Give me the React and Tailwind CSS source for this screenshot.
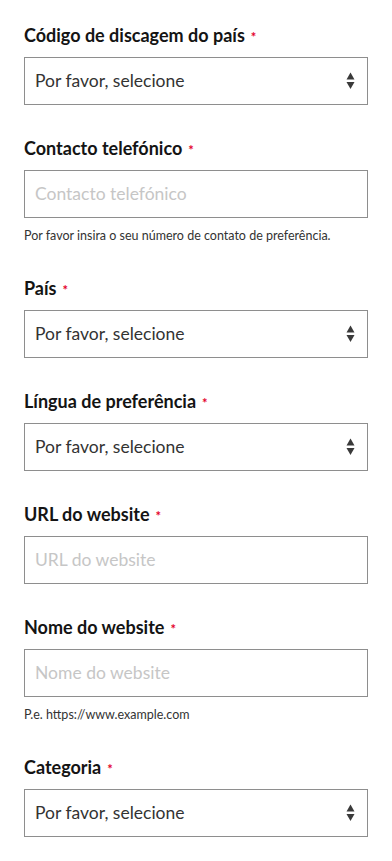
import React from "react";

const fields = [
  { label: "Código de discagem do país", type: "select" },
  { label: "Contacto telefónico", type: "input", placeholder: "Contacto telefónico", help: "Por favor insira o seu número de contato de preferência." },
  { label: "País", type: "select" },
  { label: "Língua de preferência", type: "select" },
  { label: "URL do website", type: "input", placeholder: "URL do website" },
  { label: "Nome do website", type: "input", placeholder: "Nome do website", help: "P.e. https://www.example.com" },
  { label: "Categoria", type: "select" },
];

function Arrows() {
  return (
    <svg width="9" height="18" viewBox="0 0 9 18" className="shrink-0">
      <path d="M4.5 0.5 L8.5 7.5 L0.5 7.5 Z" fill="#3a3a3a" />
      <path d="M0.5 10 L8.5 10 L4.5 17 Z" fill="#3a3a3a" />
    </svg>
  );
}

function Field({ f }) {
  return (
    <div className="flex flex-col">
      <div className="mb-[10px] h-[24px] overflow-visible whitespace-nowrap text-[18px] font-bold leading-[24px] text-[#141414]">
        {f.label}
        <span className="ml-[6px] inline-block align-middle text-[13px] font-bold leading-none text-[#e4002b]">*</span>
      </div>
      {f.type === "select" ? (
        <div className="flex h-[48px] items-center justify-between border border-[#8e8e8e] bg-white pl-[10px] pr-[12px]">
          <span className="text-[17.5px] text-[#333333]">Por favor, selecione</span>
          <Arrows />
        </div>
      ) : (
        <div className="flex h-[48px] items-center border border-[#8e8e8e] bg-white pl-[10px]">
          <span className="text-[17.5px] text-[#c6c6c6]">{f.placeholder}</span>
        </div>
      )}
      {f.help && (
        <div className="mt-[8px] h-[19px] text-[12.5px] leading-[19px] text-[#333333]">{f.help}</div>
      )}
    </div>
  );
}

export default function App() {
  return (
    <div className="min-h-[861px] bg-white px-6 pt-[23px] font-['Lato',sans-serif]">
      <div className="flex flex-col gap-[31px]">
        {fields.map((f, i) => (
          <Field key={i} f={f} />
        ))}
      </div>
    </div>
  );
}
